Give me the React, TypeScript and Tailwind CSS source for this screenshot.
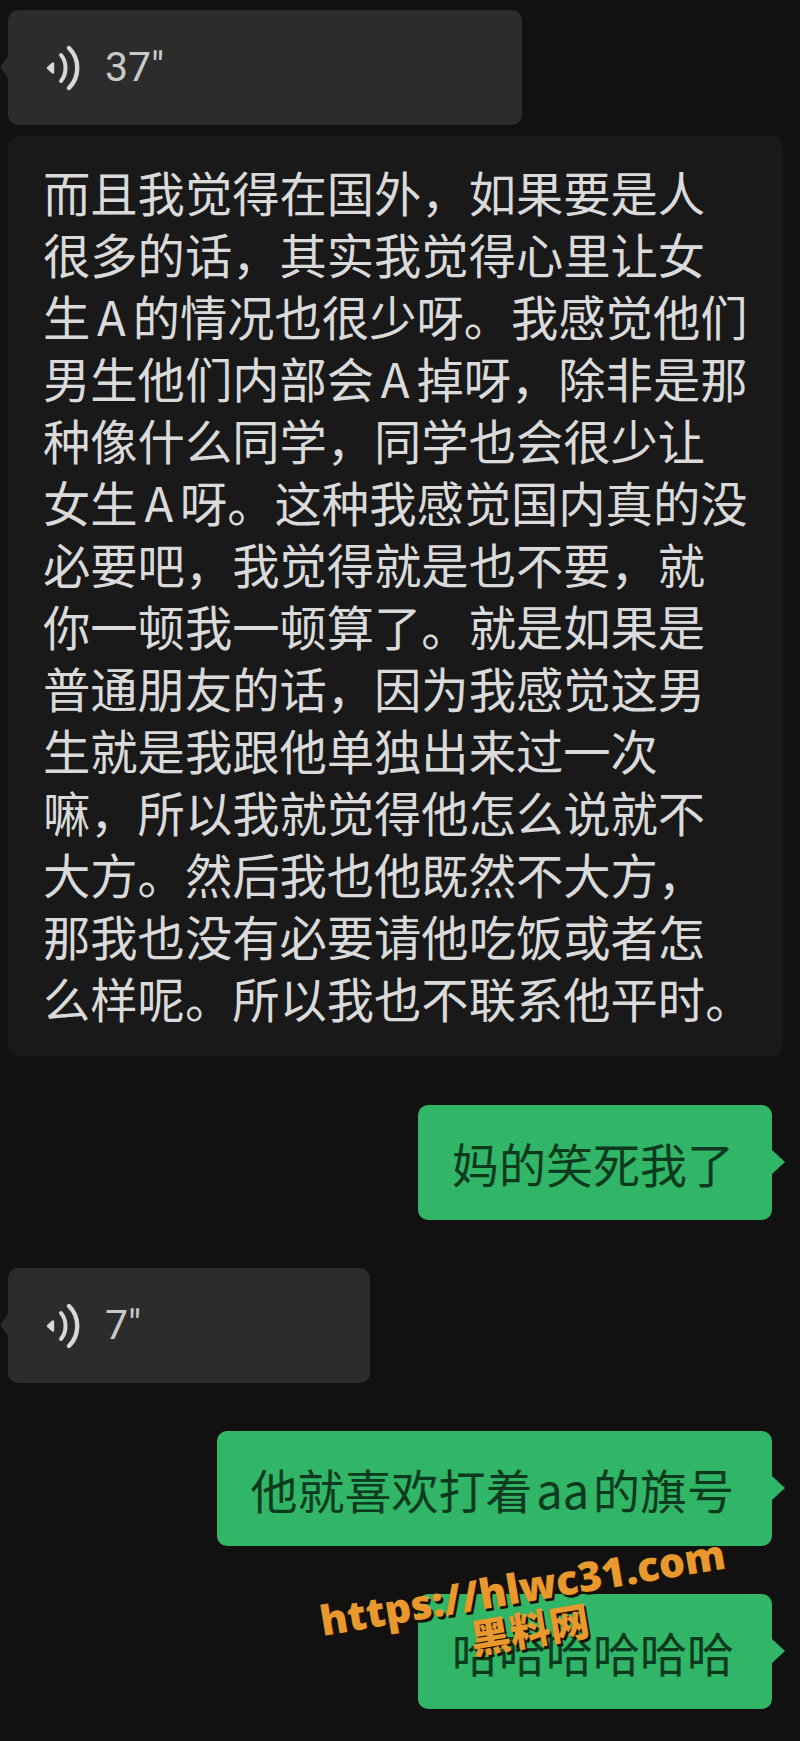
const cjkFont = "font-['Noto_Sans_CJK_SC','Noto_Sans',sans-serif]";

const lines = [
  "而且我觉得在国外，如果要是人",
  "很多的话，其实我觉得心里让女",
  "生 A 的情况也很少呀。我感觉他们",
  "男生他们内部会 A 掉呀，除非是那",
  "种像什么同学，同学也会很少让",
  "女生 A 呀。这种我感觉国内真的没",
  "必要吧，我觉得就是也不要，就",
  "你一顿我一顿算了。就是如果是",
  "普通朋友的话，因为我感觉这男",
  "生就是我跟他单独出来过一次",
  "嘛，所以我就觉得他怎么说就不",
  "大方。然后我也他既然不大方，",
  "那我也没有必要请他吃饭或者怎",
  "么样呢。所以我也不联系他平时。",
];

function VoiceBubble({ seconds, width }: { seconds: string; width: string }) {
  return (
    <div className={`relative flex h-[115px] items-center rounded-[10px] bg-[#2c2c2c] pl-[38px] ${width}`}>
      {/* tail */}
      <div className="absolute left-[-8px] top-[46px] h-0 w-0 border-y-[11px] border-r-[8px] border-y-transparent border-r-[#2c2c2c]" />
      <svg width="34" height="46" viewBox="0 0 34 46" fill="none" className="shrink-0 text-[#d8d8d8]">
        <path d="M2 23 L7 18.5 L7 27.5 Z" fill="currentColor" stroke="currentColor" strokeWidth="2.4" strokeLinejoin="round" />
        <path d="M15 10 C21 17 21 29 15 36" stroke="currentColor" strokeWidth="4" strokeLinecap="round" />
        <path d="M23 3 C34 14 34 32 23 43" stroke="currentColor" strokeWidth="4.4" strokeLinecap="round" />
      </svg>
      <span className="ml-[25px] font-['Roboto',sans-serif] text-[41px] leading-none text-[#c9c9c9]">{seconds}</span>
    </div>
  );
}

function GreenBubble({ text }: { text: string }) {
  return (
    <div className="relative ml-auto mr-[28px] flex h-[115px] items-center rounded-[10px] bg-[#31b566] pl-[34px] pr-[38px]">
      <div className="absolute right-[-13px] top-[45px] h-0 w-0 border-y-[12px] border-l-[13px] border-y-transparent border-l-[#31b566]" />
      <span className={`${cjkFont} whitespace-nowrap text-[47px] leading-none text-[#0c3a1e]`}>{text}</span>
    </div>
  );
}

export default function App() {
  return (
    <div className="relative h-[1741px] w-[800px] overflow-hidden bg-[#111111] pt-[10px] pl-[8px]">
      <VoiceBubble seconds={'37"'} width="w-[514px]" />

      <div className="mt-[11px] h-[920px] w-[775px] rounded-[10px] bg-[#191919] pl-[35px] pt-[25px]">
        {lines.map((line) => (
          <div key={line} className={`${cjkFont} h-[62px] whitespace-nowrap text-[47.3px] leading-[62px] text-[#dadada] [word-spacing:-3.8px]`}>
            {line}
          </div>
        ))}
      </div>

      <div className="mt-[49px] flex">
        <GreenBubble text="妈的笑死我了" />
      </div>

      <div className="mt-[48px]">
        <VoiceBubble seconds={'7"'} width="w-[362px]" />
      </div>

      <div className="mt-[48px] flex [word-spacing:-6.8px]">
        <GreenBubble text="他就喜欢打着 aa 的旗号" />
      </div>

      <div className="mt-[48px] flex">
        <GreenBubble text="哈哈哈哈哈哈" />
      </div>

      {/* watermark */}
      <div className="absolute left-[326px] top-[1566px] flex w-[400px] origin-center -rotate-[9.5deg] flex-col items-center font-['Open_Sans','Noto_Sans_CJK_SC',sans-serif] font-extrabold leading-none text-[#e8982c] [text-shadow:2px_3px_0_#1a1200]">
        <span className="whitespace-nowrap text-[41px]">https://hlwc31.com</span>
        <span className="mt-[3px] whitespace-nowrap text-[40px] font-black">黑料网</span>
      </div>
    </div>
  );
}
